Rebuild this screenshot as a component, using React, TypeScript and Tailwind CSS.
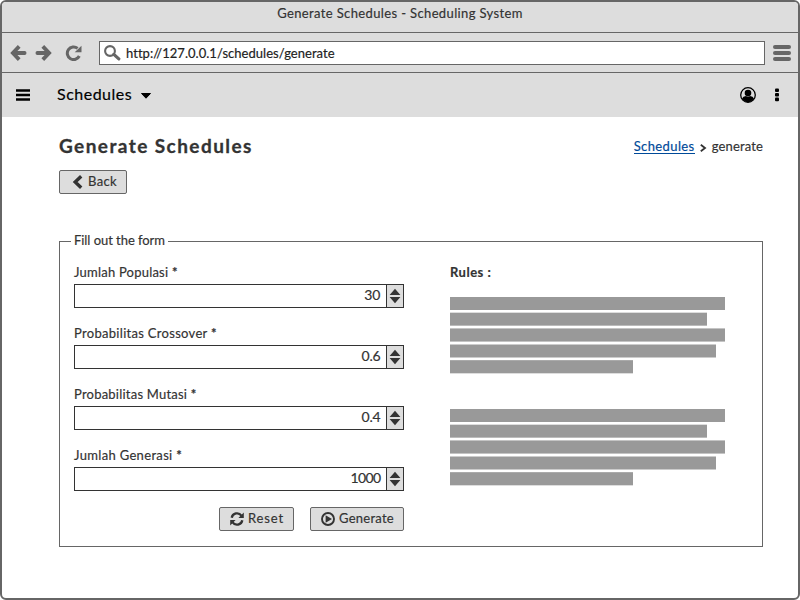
import React from 'react';

const FIELDS = [
  { label: 'Jumlah Populasi', value: '30', track: 'tracking-[0.22px]', num: 'tracking-[0px]' },
  { label: 'Probabilitas Crossover', value: '0.6', track: 'tracking-[0.3px]', num: 'tracking-[-0.2px]' },
  { label: 'Probabilitas Mutasi', value: '0.4', track: 'tracking-[0.22px]', num: 'tracking-[-0.2px]' },
  { label: 'Jumlah Generasi', value: '1000', track: 'tracking-[0.33px]', num: 'tracking-[-0.6px]' },
];

function Field({ label, value, track, num }: { label: string; value: string; track: string; num: string }) {
  return (
    <div className="h-[61px]">
      <div className={`h-[23px] leading-[23px] whitespace-nowrap ${track}`}>
        {label} <b>*</b>
      </div>
      <div className="flex h-6 w-[330px] border border-[#333]">
        <div className={`flex-1 pr-[5.5px] text-right text-[14px] leading-[19px] ${num}`}>{value}</div>
        <div className="flex w-[17px] items-center justify-center border-l border-[#333] bg-[#ddd]">
          <svg width="12" height="16" viewBox="0 0 12 16" fill="#333">
            <path d="M6 0.7 L11.4 7 H0.6 Z M0.6 9 H11.4 L6 15.3 Z" />
          </svg>
        </div>
      </div>
    </div>
  );
}

function TextBlock() {
  return (
    <div className="h-[112px]">
      <div className="mb-[2px] h-[13px] w-[275px] bg-[#999]" />
      <div className="mb-[2px] h-[14px] w-[257px] border-t border-b border-t-[#ddd] border-b-[#bbb] bg-[#999]" />
      <div className="mb-[2px] h-[14px] w-[275px] border-y border-[#c4c4c4] bg-[#999]" />
      <div className="mb-[2px] h-[14px] w-[266px] border-y border-[#ccc] bg-[#999]" />
      <div className="h-[14px] w-[183px] border-t border-b border-t-[#aaa] border-b-[#ddd] bg-[#999]" />
    </div>
  );
}

function Arrow({ className = '' }: { className?: string }) {
  return (
    <svg className={className} width="17" height="16" viewBox="0 0 17 16" fill="none" stroke="#666" strokeWidth="3.8">
      <path d="M9.2 1.4 L2.9 8 L9.2 14.6" />
      <path d="M3.5 8 H14.6" strokeLinecap="round" />
    </svg>
  );
}

export default function App() {
  return (
    <div className="h-[600px] w-[800px] overflow-hidden rounded-[6px] border-2 border-[#666] bg-white font-['Lato','Liberation_Sans',sans-serif] text-[13px] text-[#333] [-webkit-text-stroke:0.18px]">
      <div className="h-[31px] border-b border-[#666] bg-[#ddd] text-center leading-[22px] tracking-[0.37px]">
        Generate Schedules - Scheduling System
      </div>
      <div className="flex h-10 items-center border-b border-[#666] bg-[#ddd] pl-[8px] text-[#666]">
        <Arrow />
        <Arrow className="ml-2 rotate-180" />
        <svg className="ml-[13px]" width="17" height="16" viewBox="0 0 17 16">
          <path d="M14.3 11 A6.3 6.3 0 1 1 12.6 3.4" fill="none" stroke="#666" strokeWidth="3" />
          <path d="M16.5 0.8 V7.3 H9.7 Z" fill="#666" />
        </svg>
        <div className="ml-[17px] flex h-6 w-[666px] items-center border border-[#666] bg-white pl-1">
          <svg width="17" height="16" viewBox="0 0 17 16" fill="none" stroke="#666">
            <circle cx="6" cy="6" r="4.9" strokeWidth="2.1" />
            <path d="M9.8 9.4 L14.8 13.9" strokeWidth="3.2" strokeLinecap="round" />
          </svg>
          <span className="mt-[2px] ml-[5px] tracking-[0.04px] text-[#222]">http://127.0.0.1/schedules/generate</span>
        </div>
        <div className="ml-2 flex w-[18px] flex-col gap-[2px]">
          <i className="h-1 rounded-full bg-[#666]" />
          <i className="h-1 rounded-full bg-[#666]" />
          <i className="h-1 rounded-full bg-[#666]" />
        </div>
      </div>
      <div className="flex h-11 items-center bg-[#ddd] pl-[14px] text-black">
        <svg width="14" height="12" viewBox="0 0 14 12">
          <path d="M0 1.5 H14 M0 6 H14 M0 10.5 H14" stroke="#000" strokeWidth="2.7" />
        </svg>
        <span className="mb-[2px] ml-[27px] w-[76px] text-[16px] whitespace-nowrap tracking-[0.5px]">Schedules</span>
        <svg className="mt-[2px] ml-[8px]" width="10" height="6" viewBox="0 0 10 6">
          <path d="M0.5 0.5 H9.5 L5 5.2 Z" stroke="#000" strokeLinejoin="round" />
        </svg>
        <svg className="ml-auto" width="16" height="16" viewBox="0 0 16 16">
          <circle cx="8" cy="8" r="7.3" fill="none" stroke="#000" strokeWidth="1.3" />
          <circle cx="8" cy="6" r="3.3" />
          <path d="M2 11.6 Q3 9.2 6 8.9 Q8 10.3 10 8.9 Q13 9.2 14 11.6 Q11.5 15.2 8 15.2 Q4.5 15.2 2 11.6 Z" />
        </svg>
        <svg className="mr-[19px] ml-[19px]" width="4" height="14" viewBox="0 0 4 14">
          <rect y="0.5" width="4" height="3.6" rx="1" />
          <rect y="5" width="4" height="3.6" rx="1" />
          <rect y="9.6" width="4" height="3.6" rx="1" />
        </svg>
      </div>

      <div className="pr-[35px] pl-[57px]">
        <div className="flex h-[53px] items-center justify-between pt-[6px]">
          <h1 className="text-[19px] font-bold tracking-[1.43px] [-webkit-text-stroke:0.3px]">Generate Schedules</h1>
          <div className="flex items-center">
            <span className="border-b border-[#004a99] leading-[14px] tracking-[0.4px] text-[#004a99]">Schedules</span>
            <svg className="mx-[5px] mt-[3px]" width="7" height="8" viewBox="0 0 7 8">
              <path d="M0.8 0.8 L5 4 L0.8 7.2" fill="none" stroke="#333" strokeWidth="1.8" />
            </svg>
            <span className="tracking-[0.15px]">generate</span>
          </div>
        </div>
        <button className="flex h-6 w-[68px] items-center rounded-[2px] border border-[#666] bg-[#ddd] pl-3">
          <svg width="11" height="14" viewBox="0 0 11 14">
            <path d="M9.2 1.3 L3.2 7 L9.2 12.7" fill="none" stroke="#333" strokeWidth="3.4" />
          </svg>
          <span className="ml-[5px] tracking-[0.35px]">Back</span>
        </button>

        <fieldset className="mt-[37px] h-[316px] w-[704px] border border-[#666] pl-[11px]">
          <legend className="h-5 px-[3px] leading-[19px] tracking-[-0.05px] whitespace-nowrap">Fill out the form</legend>
          <div className="flex pl-[3px]">
            <div className="w-[376px] pt-[10px]">
              {FIELDS.map((f) => (
                <Field key={f.label} {...f} />
              ))}
              <div className="mt-[2px] flex w-[330px] justify-end gap-4">
                <button className="flex h-6 w-[75px] items-center rounded-[2px] border border-[#666] bg-[#ddd] pl-[10px]">
                  <svg width="14" height="14" viewBox="0 0 14 14">
                    <path d="M1.7 5.8 A5.4 5.4 0 0 1 11.4 3.6 M12.3 8.2 A5.4 5.4 0 0 1 2.6 10.4" fill="none" stroke="#333" strokeWidth="2.3" />
                    <path d="M13.8 0.6 V6 H8.4 Z M0.2 13.4 V8 H5.6 Z" fill="#333" />
                  </svg>
                  <span className="ml-1 tracking-[0.85px]">Reset</span>
                </button>
                <button className="flex h-6 w-[94px] items-center rounded-[2px] border border-[#666] bg-[#ddd] pl-[10px]">
                  <svg width="14" height="14" viewBox="0 0 14 14">
                    <circle cx="7" cy="7" r="6" fill="none" stroke="#333" strokeWidth="1.9" />
                    <path d="M4.6 3.2 L11 7 L4.6 10.8 Z" fill="#333" />
                  </svg>
                  <span className="ml-1 tracking-[0.25px]">Generate</span>
                </button>
              </div>
            </div>
            <div className="pt-[10px]">
              <div className="h-[36px] font-bold leading-[23px] tracking-[0.5px]">Rules :</div>
              <TextBlock />
              <TextBlock />
            </div>
          </div>
        </fieldset>
      </div>
    </div>
  );
}
